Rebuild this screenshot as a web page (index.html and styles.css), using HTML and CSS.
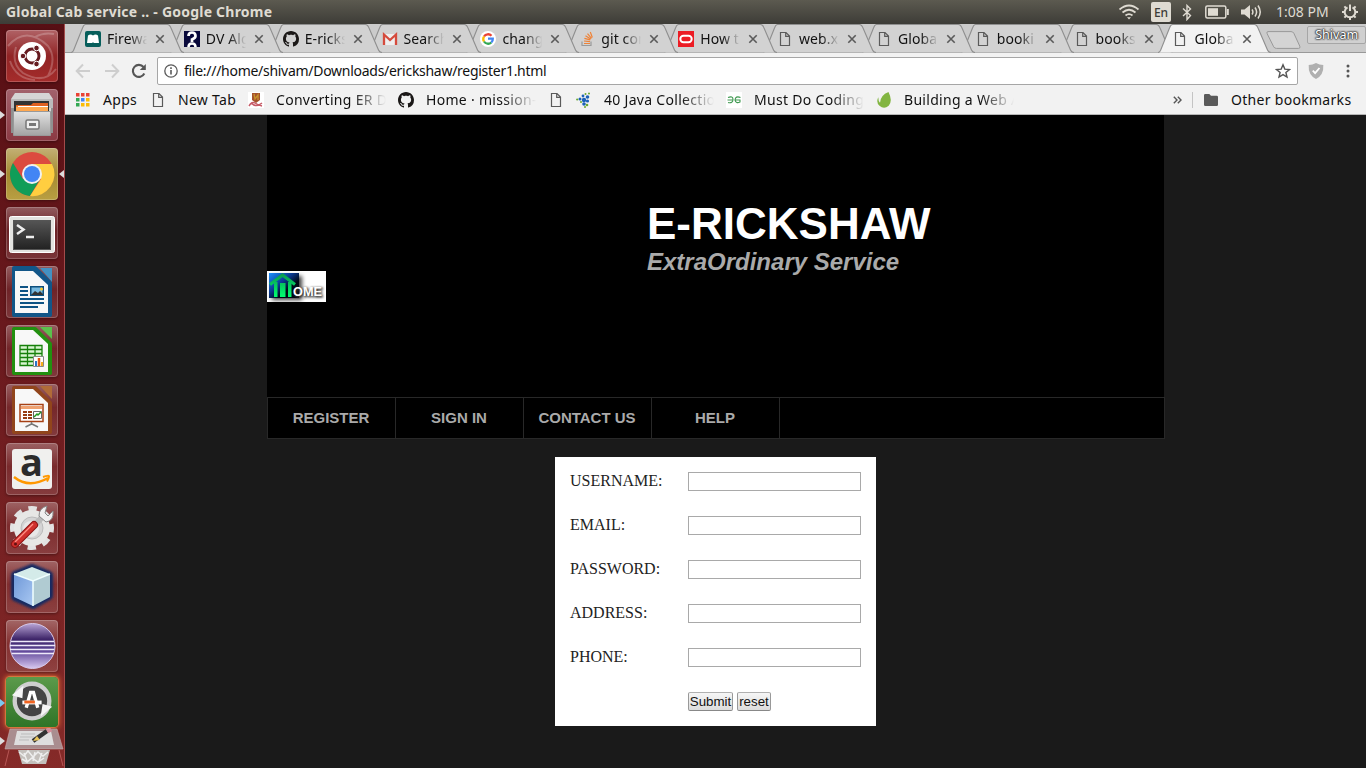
FILE: index.html
```html
<!DOCTYPE html>
<html lang="en">
<head>
<meta charset="utf-8">
<title>Global Cab service ..</title>
<link rel="stylesheet" href="styles.css">
</head>
<body>
<svg class="defs" width="0" height="0">
  <defs>
    <linearGradient id="gray" x1="0" y1="0" x2="0" y2="1"><stop offset="0" stop-color="#e2e2e2"/><stop offset="1" stop-color="#a3a3a3"/></linearGradient>
    <linearGradient id="dark" x1="0" y1="0" x2="0" y2="1"><stop offset="0" stop-color="#555"/><stop offset="1" stop-color="#222"/></linearGradient>
    <linearGradient id="bluebox" x1="0" y1="0" x2="1" y2="1"><stop offset="0" stop-color="#6f98d8"/><stop offset="1" stop-color="#a9c8f2"/></linearGradient>
    <linearGradient id="purple" x1="0" y1="0" x2="0" y2="1"><stop offset="0" stop-color="#b9a5d6"/><stop offset=".35" stop-color="#3d2468"/><stop offset=".6" stop-color="#5d4496"/><stop offset="1" stop-color="#d8c8f0"/></linearGradient>
    <linearGradient id="homebg" x1="0" y1="0" x2="1" y2="1"><stop offset="0" stop-color="#1e90ff"/><stop offset=".4" stop-color="#0a3a90"/><stop offset=".65" stop-color="#000814"/></linearGradient>
    <linearGradient id="arrow" gradientUnits="userSpaceOnUse" x1="0" y1="3" x2="0" y2="26"><stop offset="0" stop-color="#0a9a50"/><stop offset="1" stop-color="#00ff70"/></linearGradient>
    <filter id="soft" x="-30%" y="-30%" width="160%" height="160%"><feGaussianBlur stdDeviation="2.2"/></filter>
    <filter id="soft1" x="-30%" y="-30%" width="160%" height="160%"><feGaussianBlur stdDeviation="1.1"/></filter>
  </defs>
  <symbol id="shape" viewBox="0 0 113 29"><path d="M0 28.500C1.500 28.500 2 27.500 2.500 26.500L11.500 4C12.300 1.500 13 .5 14.500 .5H96.500C98 .5 99 1.500 99.800 3.500L109.500 26C110.300 28 111 28.500 113 28.500" stroke="#8f8f8f" stroke-width="1.100"/></symbol>
  <symbol id="page" viewBox="0 0 16 16"><path d="M3.500 1.500h5.500l3.500 3.500v9.500h-9zM8.700 2v3.300h3.300" fill="none" stroke="#5a5a5a" stroke-width="1.200"/></symbol>
  <symbol id="close" viewBox="0 0 10 10"><path d="M1.300 1.300l7.400 7.400M8.700 1.300l-7.400 7.400" stroke="#5a5a5a" stroke-width="1.600"/></symbol>
  <symbol id="github" viewBox="0 0 16 16"><path fill="#1b1817" d="M8 0C3.580 0 0 3.580 0 8c0 3.540 2.290 6.530 5.470 7.590.4.070.55-.17.55-.38 0-.19-.01-.82-.01-1.490-2.010.37-2.530-.49-2.690-.94-.09-.23-.48-.94-.82-1.130-.28-.15-.68-.52-.01-.53.63-.01 1.080.58 1.230.82.72 1.210 1.870.87 2.330.66.070-.52.28-.87.51-1.070-1.780-.2-3.640-.89-3.640-3.950 0-.87.31-1.590.82-2.150-.08-.2-.36-1.020.08-2.120 0 0 .67-.21 2.200.82.64-.18 1.320-.27 2-.27s1.360.09 2 .27c1.530-1.040 2.200-.82 2.200-.82.44 1.100.16 1.920.08 2.120.51.56.82 1.270.82 2.150 0 3.070-1.870 3.750-3.650 3.950.29.25.54.73.54 1.480 0 1.070-.01 1.930-.01 2.200 0 .21.15.46.55.38A8.010 8.010 0 0 0 16 8c0-4.420-3.580-8-8-8z"/></symbol>
</svg>

<header class="panel">
  <div class="panel-title">Global Cab service .. - Google Chrome</div>
  <div class="tray">
    <svg class="wifi" width="22" height="16" viewBox="0 0 22 16" fill="none" stroke="#dfdbd2" stroke-width="1.700"><path d="M1.500 5.500Q11-2.500 20.500 5.500M4.500 8.500Q11 3 17.500 8.500M7.500 11.500Q11 8.700 14.500 11.500"/><path d="M9 13.300h4L11 15.500z" fill="#dfdbd2" stroke="none"/></svg>
    <span class="lang">En</span>
    <svg class="bt" width="10" height="17" viewBox="0 0 10 17" fill="none" stroke="#dfdbd2" stroke-width="1.400"><path d="M1 4.500l7.500 7L5 15.500V1.500L8.500 5 1 12"/></svg>
    <svg class="batt" width="24" height="14" viewBox="0 0 24 14"><rect x=".8" y="1" width="20" height="12" rx="1.500" fill="none" stroke="#dfdbd2" stroke-width="1.500"/><rect x="3" y="3.200" width="10" height="7.600" fill="#dfdbd2"/><path d="M22.800 4v6" stroke="#dfdbd2" stroke-width="2"/></svg>
    <svg class="vol" width="21" height="16" viewBox="0 0 21 16"><path d="M0 5.500h3.500L9 1v14l-5.500-4.500H0z" fill="#dfdbd2"/><path d="M11 5.500q1.800 2.500 0 5M14 3.500q3.200 4.500 0 9M17 1.500q4.500 6.500 0 13" fill="none" stroke="#dfdbd2" stroke-width="1.500"/></svg>
    <span class="clock">1:08 PM</span>
    <svg class="gear" width="18" height="18" viewBox="0 0 18 18" fill="none" stroke="#dfdbd2"><path d="M6.500 4.300a5.300 5.300 0 1 0 5 0" stroke-width="2"/><path d="M9 1.500v6.500" stroke-width="2"/><path d="M3.400 3.400l1.800 1.800M14.600 3.400l-1.800 1.800M1 9h2.500M17 9h-2.500M3.400 14.600l1.800-1.800M14.600 14.600l-1.800-1.800M9 17v-2.500" stroke-width="2"/></svg>
  </div>
</header>

<div class="desktop">
  <aside class="launcher">
    <div class="tile ubuntu"><svg viewBox="0 0 52 52"><path d="M2 16Q20-5 42 16Q51 28 42 46M48 4Q38 2 29 7M50 39Q38 55 17 43Q5 34 10 17M4 31Q10 49 29 50" fill="none" stroke="#fff" stroke-opacity=".22" stroke-width="2"/><circle cx="26" cy="26" r="14" fill="#fff"/><circle cx="26" cy="26" r="7" fill="none" stroke="#661b20" stroke-width="3"/><g fill="#661b20" stroke="#fff" stroke-width="1"><circle cx="17" cy="26" r="2.800"/><circle cx="30.500" cy="18" r="2.800"/><circle cx="30.500" cy="34" r="2.800"/></g></svg></div>
    <div class="tile files"><svg viewBox="0 0 52 52"><path d="M9 4h34l4 6v34H5V10z" fill="#d5d5d5"/><path d="M5 10h42v9H5z" fill="#bbb"/><path d="M5 19h3v25H5zM45 19h2v25h-2z" fill="#909090"/><path d="M8 12h35v12H8z" fill="#333"/><path d="M10 16h15l2-2h15v8H10z" fill="#e06020"/><path d="M10 17.500h32v5H10z" fill="#ffa850"/><path d="M12 17.500h30" stroke="#fff" stroke-width="1"/><path d="M7.500 22.500h37v24h-37z" fill="url(#gray)" stroke="#999"/><rect x="20" y="31" width="13" height="9" rx="1.500" fill="#eee" stroke="#777" stroke-width="1.500"/><path d="M23 35.500h7" stroke="#777" stroke-width="3"/></svg><i class="pip left"></i></div>
    <div class="tile chrome"><svg viewBox="0 0 52 52"><circle cx="26" cy="26" r="22" fill="#dc4b3f"/><path d="M7 15A22 22 0 0 0 24 48L34 31 26 26 17 31z" fill="#109d58"/><path d="M26 16H46A22 22 0 0 1 24 48L35 31z" fill="#ffce40"/><circle cx="26" cy="26" r="10" fill="#f1f1f1"/><circle cx="26" cy="26" r="8" fill="#4285f4"/></svg><i class="pip left"></i><i class="pip right"></i></div>
    <div class="tile"><svg viewBox="0 0 52 52"><rect x="3.500" y="9.500" width="45" height="36" rx="2" fill="#e3e3e0" stroke="#fff"/><rect x="7.500" y="13.500" width="37" height="29" fill="url(#dark)" stroke="#555"/><path d="M11 18l6.500 4.500-6.500 4.500M20 30h8" fill="none" stroke="#eee" stroke-width="2.500"/></svg></div>
    <div class="tile"><svg viewBox="0 0 52 52"><path d="M8 2h21l15 15v32H8z" fill="#125688" stroke="#125688" stroke-width="4" stroke-linejoin="round"/><path d="M9 5h18l15 14v28H9z" fill="#f8f8f8"/><path d="M34 2h12v14z" fill="#4391c2"/><path d="M14 21h8M14 25h8M14 29h8M14 33h24M14 37h24M14 41h18" stroke="#0e5384" stroke-width="2"/><path d="M24 20h14v10H24z" fill="#0d4f7d"/><path d="M25.500 21.500h11v7h-11z" fill="#77b9df"/><path d="M25 29l4-4 3 2 2-2 3 3v1z" fill="#333"/><circle cx="35.500" cy="23" r="1.500" fill="#ffca28"/></svg></div>
    <div class="tile"><svg viewBox="0 0 52 52"><path d="M8 4h21l15 15v29H8z" fill="#229010" stroke="#229010" stroke-width="4" stroke-linejoin="round"/><path d="M9 5h18l15 14v28H9z" fill="#f8f8f8"/><path d="M34 2h12v12z" fill="#5bc04c"/><path d="M14 20.500h22v20H14zM14 24.500h22M14 28.500h22M14 32.500h22M14 36.500h22M21.500 20v20M29 20v20" fill="#d8f5d0" stroke="#16800a" stroke-width="1.300"/><path d="M27.500 31.500h10v10h-10z" fill="#fff" stroke="#888"/><path d="M30 36v5" stroke="#2b73c7" stroke-width="2"/><path d="M33 33v8" stroke="#e25611" stroke-width="2.500"/><path d="M36 37v4" stroke="#f5ad1b" stroke-width="2"/></svg></div>
    <div class="tile"><svg viewBox="0 0 52 52"><path d="M8 4h21l15 15v29H8z" fill="#91451c" stroke="#91451c" stroke-width="4" stroke-linejoin="round"/><path d="M9 5h18l15 14v28H9z" fill="#f8f8f8"/><path d="M34 2h12v13z" fill="#b16b38"/><path d="M14 20.500h23v17H14z" fill="#fff" stroke="#a64014" stroke-width="1.500"/><path d="M15 22h21v3H15z" fill="#efa170"/><path d="M17 28h4M17 31h4M17 34h4M22 28h4M22 31h4M22 34h4" stroke="#963c11" stroke-width="2"/><path d="M27.500 27.500h8v7h-8z" fill="#fff" stroke="#666"/><path d="M28 33l3-3 1 1 3-3" fill="none" stroke="#229c25" stroke-width="1.500"/><path d="M25.500 38v2l-6 3M26 40l6 3" stroke="#777" stroke-width="1.500" fill="none"/></svg></div>
    <div class="tile"><svg viewBox="0 0 52 52"><rect x="6" y="6" width="40" height="40" rx="3" fill="#f0f0ee"/><text x="25.500" y="33" text-anchor="middle" class="amz">a</text><path d="M8 34q15 12 34 1" fill="none" stroke="#ff9800" stroke-width="2.500"/><path d="M37 34q6-2 6-.5t-2 5" fill="none" stroke="#ff9800" stroke-width="2"/></svg></div>
    <div class="tile"><svg viewBox="0 0 52 52"><circle cx="26" cy="26" r="19" fill="none" stroke="#e2e2e2" stroke-width="6" stroke-dasharray="8 6.920" transform="rotate(-12 26 26)"/><circle cx="26" cy="26" r="18" fill="#e7e7e5"/><circle cx="26" cy="26" r="11" fill="#d4d4d4" stroke="#bbb"/><circle cx="25" cy="27" r="8" fill="#e8e8e8"/><path d="M28 24L38 13" stroke="#bbb" stroke-width="6"/><path d="M33 14q0-8 8-10l-2 7 3 3 5-5q1 10-7 11z" fill="#f0f0f0" stroke="#888"/><path d="M9 42L28 23" stroke="#8b1414" stroke-width="8" stroke-linecap="round"/><path d="M9 42L28 23" stroke="#d0302d" stroke-width="6" stroke-linecap="round"/><path d="M9 40L27 22" stroke="#ff8d83" stroke-width="1.200"/><circle cx="9.500" cy="42" r="1.500" fill="#621010"/></svg></div>
    <div class="tile"><svg viewBox="0 0 52 52"><path d="M26 7L43 14V35L27 44 9 36V14z" fill="#16295c" stroke="#172b62" stroke-width="8" stroke-linejoin="round" filter="url(#soft1)"/><path d="M26 6L44 13 27 20 8 13z" fill="#d4ebe9"/><path d="M8 13l19 7v25L8 36z" fill="url(#bluebox)"/><path d="M27 20l17-7v23L27 45z" fill="#b0cbd2"/><path d="M8 13l19 7 17-7M27 20v25" stroke="#f0ffff" stroke-width="1.500" fill="none"/></svg></div>
    <div class="tile"><svg viewBox="0 0 52 52"><circle cx="26.500" cy="26" r="22.500" fill="url(#purple)" stroke="#d7c9ea"/><path d="M5 21.500h43M4 25.500h45M4 29.500h44M6 33.500h42" stroke="#eee9f9" stroke-width="1.300"/></svg></div>
    <div class="tile updater"><svg viewBox="0 0 52 52"><circle cx="26" cy="25" r="18" fill="#444" stroke="#cfcfcf" stroke-width="4.500"/><path d="M5 19L17 9 16 22zM47 31L35 41 37 28z" fill="#f5f5f5"/><path d="M20 32l4.500-16h3l4.500 16" fill="none" stroke="#fff" stroke-width="3.500"/><path d="M16 26.500h20" stroke="#fff" stroke-width="4"/><path d="M18 26h11" stroke="#f26522" stroke-width="3"/></svg><i class="pip left blue"></i></div>
    <div class="folded"><svg viewBox="0 0 60 40" width="60" height="40"><path d="M6 1h47l6 20H1z" fill="#a98d8f" stroke="#caa" stroke-opacity=".6"/><path d="M13 3h34l3 14H10z" fill="#dedede"/><path d="M17 6h14M16 9h14M15 12h10" stroke="#bbb"/><path d="M29 13L43 3" stroke="#333" stroke-width="4.500"/><path d="M29 13l4-5 3 4z" fill="#e7c35a"/><path d="M43 3l4-2" stroke="#d48d9a" stroke-width="5"/><path d="M14 22h32l-4 14H18z" fill="#c4c0bc"/><path d="M15 24l5 4 4-5 5 6 5-5 5 4 5-4M18 31l5 3 5-4 6 4 6-4M20 25l3 8M31 24l-2 9M38 25l-3 8" fill="none" stroke="#eee" stroke-width="1.500"/><path d="M5 22L1 38M55 22l4 16" stroke="#b75755"/></svg><i class="pip left"></i></div>
  </aside>

  <section class="browser">
    <div class="tabstrip">
      <div class="tab"><svg class="shape"><use href="#shape"/></svg><svg class="fav" viewBox="0 0 16 16"><rect width="16" height="16" rx="2" fill="#075e5b"/><path d="M3 4.500q2.500-2 5 0 2.500-2 5 0l1 7.500H9l-1-.8-1 .8H2z" fill="#fff"/></svg><span class="label">Firewa</span><svg class="x"><use href="#close"/></svg></div>
      <div class="tab"><svg class="shape"><use href="#shape"/></svg><svg class="fav" viewBox="0 0 16 16"><rect width="16" height="16" fill="#08083a"/><path d="M4.500 5q0-3.500 3.500-3.500T11.500 5Q11.500 7 8 8.500V11" fill="none" stroke="#fff" stroke-width="2.700"/><path d="M4.500 16q0-3.500 3.500-3.500t3.500 3.500" fill="none" stroke="#fff" stroke-width="2.500"/></svg><span class="label">DV Alg</span><svg class="x"><use href="#close"/></svg></div>
      <div class="tab"><svg class="shape"><use href="#shape"/></svg><svg class="fav"><use href="#github"/></svg><span class="label">E-ricks</span><svg class="x"><use href="#close"/></svg></div>
      <div class="tab"><svg class="shape"><use href="#shape"/></svg><svg class="fav" viewBox="0 0 16 16"><path d="M1 3h14v11H1z" fill="#eee"/><path d="M2 14V3.500l6 5.500 6-5.500V14" fill="none" stroke="#d54b3d" stroke-width="2.300"/></svg><span class="label">Search</span><svg class="x"><use href="#close"/></svg></div>
      <div class="tab"><svg class="shape"><use href="#shape"/></svg><svg class="fav" viewBox="0 0 16 16"><circle cx="8" cy="8" r="8" fill="#fff"/><g fill="none" stroke-width="2.300"><path d="M4 5.500A4.800 4.800 0 0 1 11.500 4.700" stroke="#ea4335"/><path d="M4 5.500a4.800 4.800 0 0 0 0 5" stroke="#fbbc05"/><path d="M4 10.500a4.800 4.800 0 0 0 7.300 1" stroke="#34a853"/><path d="M11.300 11.500Q13 10 12.800 7.700H8" stroke="#4285f4"/></g></svg><span class="label">chang</span><svg class="x"><use href="#close"/></svg></div>
      <div class="tab"><svg class="shape"><use href="#shape"/></svg><svg class="fav" viewBox="0 0 16 16"><path d="M3 10.500v4h9v-4" fill="none" stroke="#999" stroke-width="1.200"/><path d="M5 12.500h6M5 10l6 .6M5.400 7.300l5.900 1.600M6.500 4.800l5.200 3.200M8.500 2.600l4 4.700M11.300 1l2 5.500" stroke="#ef8236" stroke-width="1.200"/></svg><span class="label">git com</span><svg class="x"><use href="#close"/></svg></div>
      <div class="tab"><svg class="shape"><use href="#shape"/></svg><svg class="fav" viewBox="0 0 16 16"><path d="M0 0h16v16H0z" fill="#ec1c24"/><rect x="2.300" y="4.800" width="11.400" height="6.400" rx="3.200" fill="none" stroke="#fff" stroke-width="2"/></svg><span class="label">How t</span><svg class="x"><use href="#close"/></svg></div>
      <div class="tab"><svg class="shape"><use href="#shape"/></svg><svg class="fav"><use href="#page"/></svg><span class="label">web.x</span><svg class="x"><use href="#close"/></svg></div>
      <div class="tab"><svg class="shape"><use href="#shape"/></svg><svg class="fav"><use href="#page"/></svg><span class="label">Globa</span><svg class="x"><use href="#close"/></svg></div>
      <div class="tab"><svg class="shape"><use href="#shape"/></svg><svg class="fav"><use href="#page"/></svg><span class="label">booki</span><svg class="x"><use href="#close"/></svg></div>
      <div class="tab"><svg class="shape"><use href="#shape"/></svg><svg class="fav"><use href="#page"/></svg><span class="label">books</span><svg class="x"><use href="#close"/></svg></div>
      <div class="tab active"><svg class="shape"><use href="#shape"/></svg><svg class="fav"><use href="#page"/></svg><span class="label">Globa</span><svg class="x"><use href="#close"/></svg></div>
      <svg class="newtab" width="36" height="18" viewBox="0 0 36 18"><path d="M2 .6h23q2 0 2.800 1.600l6 13q.8 2.200-1.300 2.200H10.500q-2 0-2.800-1.600l-6.500-13Q.3.600 2 .6z" fill="#d4d4d4" stroke="#999"/></svg>
      <span class="profile">Shivam</span>
    </div>

    <div class="toolbar">
      <svg class="back" width="16" height="16" viewBox="0 0 16 16"><path d="M15 8H2M8 1.500L1.700 8 8 14.500" fill="none" stroke="#cecece" stroke-width="2"/></svg>
      <svg class="fwd" width="16" height="16" viewBox="0 0 16 16"><path d="M1 8h13M8 1.500L14.300 8 8 14.500" fill="none" stroke="#cecece" stroke-width="2"/></svg>
      <svg class="reload" width="16" height="16" viewBox="0 0 16 16"><path d="M13.300 10.500A6 6 0 1 1 12.500 4" fill="none" stroke="#565656" stroke-width="2.100"/><path d="M14.800 1v6H8.800z" fill="#565656"/></svg>
      <div class="omnibox">
        <svg width="14" height="14" viewBox="0 0 14 14"><circle cx="7" cy="7" r="6.200" fill="none" stroke="#5a5a5a" stroke-width="1.300"/><path d="M7 6v4.500M7 3.300v1.600" stroke="#5a5a5a" stroke-width="1.600"/></svg>
        <span class="url">file:///home/shivam/Downloads/erickshaw/register1.html</span>
        <svg class="star" width="16" height="16" viewBox="0 0 16 16"><path d="M8 1.800l1.800 4.300 4.700.4-3.600 3 1.100 4.600L8 11.600l-4 2.500 1.100-4.600-3.600-3 4.700-.4z" fill="none" stroke="#555" stroke-width="1.400"/></svg>
      </div>
      <svg class="shield" width="16" height="16" viewBox="0 0 16 16"><path d="M8 0q3.500 2 7.300 2Q16 12 8 16 0 12 .7 2 4.500 2 8 0z" fill="#b0b0b0"/><path d="M4.800 7.700l2.300 2.500L11.500 5" fill="none" stroke="#fff" stroke-width="1.800"/></svg>
      <svg class="dots" width="4" height="14" viewBox="0 0 4 14" fill="#555"><circle cx="2" cy="2" r="1.500"/><circle cx="2" cy="7" r="1.500"/><circle cx="2" cy="12" r="1.500"/></svg>
    </div>

    <nav class="bookmarks">
      <svg class="apps" width="14" height="14" viewBox="0 0 14 14"><path d="M0 0h3.500v3.500H0zM5 0h3.500v3.500H5zM10 0h3.500v3.500H10z" fill="#ea4335"/><path d="M0 5h3.500v3.500H0zM0 10h3.500v3.500H0z" fill="#34a853"/><path d="M5 5h3.500v3.500H5z" fill="#4285f4"/><path d="M10 5h3.500v3.500H10zM5 10h3.500v3.500H5zM10 10h3.500v3.500H10z" fill="#fbbc05"/></svg>
      <span class="bm w-apps">Apps</span>
      <svg class="ico"><use href="#page"/></svg><span class="bm w-new">New Tab</span>
      <svg class="ico" viewBox="0 0 16 16"><path d="M0 0h16v16H0z" fill="#fff"/><path d="M4 1h8v7l-4 3-4-3z" fill="#a4522c"/><path d="M6 2l1 5 3-4v5" stroke="#c9932b" stroke-width="1.300" fill="none"/><path d="M1 14q3-5 6-3t7 3M3 11q5 5 11 0" stroke="#c75b67" stroke-width="1.500" fill="none"/></svg><span class="bm fade w-long">Converting ER D</span>
      <svg class="ico"><use href="#github"/></svg><span class="bm fade w-long">Home · mission-</span>
      <svg class="ico lone"><use href="#page"/></svg>
      <svg class="ico" viewBox="0 0 16 16"><g fill="#1b61b8"><circle cx="8" cy="8" r="2.200"/><circle cx="11.500" cy="5" r="1.800"/><circle cx="7" cy="4" r="1.400"/><circle cx="4" cy="7" r="1.500"/><circle cx="11.500" cy="9" r="1.600"/><circle cx="8" cy="12" r="1.800"/></g><g fill="#68a82e"><circle cx="1.200" cy="7.500" r="1.100"/><circle cx="9.500" cy="2" r="1"/><circle cx="13" cy="1.500" r="1"/><circle cx="11" cy="13" r="1.300"/><circle cx="5" cy="10" r="1"/><circle cx="9" cy="15" r="1"/></g></svg><span class="bm fade w-long">40 Java Collectio</span>
      <svg class="ico" viewBox="0 0 16 16"><path d="M0 0h16v16H0z" fill="#fff"/><path d="M1.500 8H7M2 5.500q5-2 5 2t-5 3M14.500 8H9M14.500 5.500q-5-2-5.500 2.500 1 4 5 2V8" fill="none" stroke="#3f9950" stroke-width="1.100"/></svg><span class="bm fade w-long">Must Do Coding</span>
      <svg class="ico" viewBox="0 0 16 16"><path d="M12.500 0Q17 9 12.700 13.800 8 17.500 3.500 13.800-.3 10 2.300 5.200q0 4 1.700 5.600Q4.500 3 12.500 0z" fill="#82b541"/></svg><span class="bm fade w-long">Building a Web A</span>
      <svg class="more" width="9" height="8" viewBox="0 0 9 8"><path d="M.8.8L4 4 .8 7.200M4.800.8L8 4 4.800 7.200" fill="none" stroke="#555" stroke-width="1.400"/></svg>
      <span class="divider"></span>
      <svg class="folder" width="14" height="12" viewBox="0 0 14 12"><path d="M1.300 0h4L7 1.700h5.700q1.300 0 1.300 1.300v7.700q0 1.300-1.300 1.300H1.300Q0 12 0 10.700V1.300Q0 0 1.300 0z" fill="#5a5a5a"/></svg>
      <span class="bm other">Other bookmarks</span>
    </nav>

    <main class="viewport">
      <div class="banner">
        <svg class="home" width="59" height="31" viewBox="0 0 59 31"><path d="M0 0h59v31H0z" fill="#fff"/><path d="M5 5h30v24H5z" fill="#000" filter="url(#soft)" opacity=".75"/><path d="M2 2h30v25H2z" fill="url(#homebg)"/><path d="M3 13.500L15.500 4 28 13.500" fill="none" stroke="url(#arrow)" stroke-width="3.200"/><path d="M7 11h3.500v15H7zM21 11h3.500v15H21zM13 12h5.500v14H13z" fill="url(#arrow)"/><text x="27" y="26" class="ome shade" textLength="29" lengthAdjust="spacingAndGlyphs">OME</text><text x="26" y="25" class="ome" textLength="29" lengthAdjust="spacingAndGlyphs">OME</text></svg>
        <div class="brand"><h1>E-RICKSHAW</h1><h2>ExtraOrdinary Service</h2></div>
      </div>
      <nav class="menu"><a>REGISTER</a><a>SIGN IN</a><a>CONTACT US</a><a>HELP</a></nav>
      <form class="form">
        <label for="u">USERNAME:</label><input id="u" type="text">
        <label for="e">EMAIL:</label><input id="e" type="text">
        <label for="p">PASSWORD:</label><input id="p" type="password">
        <label for="a">ADDRESS:</label><input id="a" type="text">
        <label for="t">PHONE:</label><input id="t" type="text">
        <div class="actions"><button type="button" class="submit">Submit</button><button type="button" class="reset">reset</button></div>
      </form>
    </main>
  </section>
</div>
</body>
</html>
```
FILE: styles.css
```css
* { box-sizing: border-box; }
body { margin: 0; width: 1366px; height: 768px; overflow: hidden; background: #1a1a1a; font-family: "Noto Sans", sans-serif; }
svg { display: block; flex: none; }
.defs { position: absolute; }

/* Top panel */
.panel { height: 24px; display: flex; align-items: center; justify-content: space-between; padding: 0 7px 0 6px; background: linear-gradient(#5c5a50, #3d3c37); color: #dfdbd2; }
.panel-title { font-size: 14px; font-weight: 700; letter-spacing: .22px; white-space: nowrap; margin-top: -1px; }
.tray { display: flex; align-items: center; }
.lang { width: 20px; height: 20px; margin-left: 11px; border-radius: 2px; background: #dfdbd2; color: #3c3b37; font-size: 12px; font-weight: 500; line-height: 21px; text-align: center; }
.bt { margin-left: 11px; }
.batt { margin-left: 13px; }
.vol { margin-left: 12px; }
.clock { width: 52px; margin: -1px 0 0 14px; font-size: 14px; white-space: nowrap; }
.gear { margin-left: 13px; }

.desktop { display: flex; height: 744px; }

/* Launcher */
.launcher { width: 65px; flex: none; padding: 6px 0 0 6px; overflow: hidden; display: flex; flex-direction: column; gap: 7px; background: linear-gradient(90deg, transparent 64px, #a34b4b 64px), linear-gradient(#570f14, #6b1a1e 45%, #852a28); }
.tile { position: relative; width: 52px; height: 52px; flex: none; border-radius: 4px; background: linear-gradient(rgba(255,255,255,.3), rgba(255,255,255,.05) 45%, rgba(255,255,255,.13)); box-shadow: inset 0 0 0 1px rgba(255,255,255,.2), 0 1px 3px rgba(0,0,0,.35); }
.tile svg { width: 52px; height: 52px; }
.ubuntu { background: linear-gradient(#b06266, #912425 50%, #a52c2b); }
.files { background: linear-gradient(#a2626c, #8b3943); }
.chrome { background: linear-gradient(#c3b075, #a58b32 50%, #b99f42); }
.updater { height: 50px; margin-top: -2px; background: linear-gradient(#5c9a4b, #2f7427); box-shadow: 0 0 1px 1px #d97a40, 0 0 5px 2px #c75a32; }
.updater svg { height: 50px; }
.folded { position: relative; width: 60px; height: 40px; margin: -6px 0 0 -2px; flex: none; }
.amz { font: 700 38px "Open Sans", sans-serif; fill: #2b2b2b; }
.pip { position: absolute; top: 22px; border: 4px solid transparent; }
.pip.left { left: -6px; border-left: 5px solid #ddd; border-right: 0; }
.pip.right { right: -6px; border-right: 5px solid #ddd; border-left: 0; }
.pip.blue { border-left-color: #7cc8f0; }
.folded .pip { left: -4px; top: 9px; }

/* Browser chrome */
.browser { width: 1301px; flex: none; display: flex; flex-direction: column; }
.tabstrip { height: 29px; display: flex; padding-left: 6px; background: linear-gradient(#cbcbcb 28px, #999 28px); overflow: hidden; }
.tab { position: relative; isolation: isolate; width: 113px; height: 29px; flex: none; margin-right: -14.150px; padding: 1px 0 0 14px; display: flex; align-items: center; }
.tab:nth-child(1) { z-index: 12; } .tab:nth-child(2) { z-index: 11; } .tab:nth-child(3) { z-index: 10; } .tab:nth-child(4) { z-index: 9; }
.tab:nth-child(5) { z-index: 8; } .tab:nth-child(6) { z-index: 7; } .tab:nth-child(7) { z-index: 6; } .tab:nth-child(8) { z-index: 5; }
.tab:nth-child(9) { z-index: 4; } .tab:nth-child(10) { z-index: 3; } .tab:nth-child(11) { z-index: 2; }
.tab.active { z-index: 20; }
.shape { position: absolute; z-index: -1; left: 0; top: 0; width: 113px; height: 29px; fill: #d2d2d2; }
.active .shape { fill: #f2f2f2; }
.fav, .ico { width: 16px; height: 16px; }
.label { width: 41px; margin: -2px 0 0 6px; font-size: 14px; letter-spacing: .1px; overflow: hidden; white-space: nowrap; color: #111; -webkit-mask-image: linear-gradient(90deg, #000 55%, transparent 98%); mask-image: linear-gradient(90deg, #000 55%, transparent 98%); }
.x { width: 10px; height: 10px; margin-left: 7px; }
.newtab { margin: 7px 0 0 9px; }
.profile { width: 60px; height: 18px; margin: 2px 0 0 5px; border: 1px solid #a6a6a6; border-radius: 2px; background: #d0d0d0; color: #fff; font-size: 12.500px; line-height: 16px; text-align: center; text-shadow: 0 0 1px #222, 0 0 2px #333, 0 0 2px #333, 0 0 2px #333; }
.toolbar { height: 32px; display: flex; align-items: center; background: #f2f2f2; padding: 3px 0 0 10px; }
.fwd { margin-left: 13px; }
.reload { margin-left: 11px; }
.omnibox { width: 1141px; height: 28px; margin-left: 10px; padding: 0 6px; display: flex; align-items: center; border: 1px solid #a6a6a6; border-radius: 2px; background: #fff; }
.url { margin-left: 6px; font-size: 14px; letter-spacing: -.28px; white-space: nowrap; color: #111; }
.star { margin-left: auto; }
.shield { margin-left: 10px; }
.dots { margin-left: 22px; }
.bookmarks { height: 30px; display: flex; align-items: center; background: #f2f2f2; border-bottom: 1px solid #b6b6b6; padding-left: 11px; }
.bm { flex: none; margin-left: 12px; font-size: 14px; letter-spacing: .3px; color: #111; white-space: nowrap; overflow: hidden; }
.apps { margin-right: 1px; }
.w-apps { width: 35px; overflow: visible; }
.w-new { width: 58px; overflow: visible; }
.w-long { width: 110px; }
.bm + .ico { margin-left: 12px; }
.fade { -webkit-mask-image: linear-gradient(90deg, #000 70%, transparent 100%); mask-image: linear-gradient(90deg, #000 70%, transparent 100%); }
.lone { margin-right: 12px; }
.more { margin-left: auto; }
.divider { width: 1px; height: 16px; margin-left: 10px; background: #c4c4c4; }
.folder { margin-left: 11px; }
.other { width: 121px; margin: 0 14px 0 13px; overflow: visible; }

/* Page */
.viewport { height: 653px; padding-left: 202px; background: #1a1a1a; }
.banner { width: 897px; height: 282px; background: #000; display: flex; align-items: flex-start; }
.home { margin-top: 156px; }
.ome { font: 700 13.500px "Liberation Sans", sans-serif; fill: #fff; }
.shade { fill: #222; filter: url(#soft1); stroke: #333; stroke-width: 1px; }
.brand { margin: 84px 0 0 321px; font-family: "Liberation Sans", Arial, sans-serif; white-space: nowrap; }
h1 { margin: 0; font-size: 44px; line-height: 50px; color: #fff; }
h2 { margin: -1px 0 0; font-size: 24px; line-height: 27px; font-style: italic; color: #aaa; }
.menu { width: 898px; height: 42px; display: flex; background: #000; border: 1px solid #282828; }
.menu a { width: 128px; padding-right: 1px; border-right: 1px solid #282828; font: 700 15px/40px "Liberation Sans", Arial, sans-serif; text-align: center; color: #aaa; }
.form { width: 321px; height: 269px; margin: 18px 0 0 288px; padding: 15px; background: #fff; display: grid; grid-template-columns: 118px 173px; grid-auto-rows: 19px; row-gap: 25px; font: 16px/18px "Liberation Serif", "Times New Roman", serif; color: #222; }
input { width: 173px; height: 19px; border: 1px solid #a9a9a9; padding: 1px; background: #fff; }
.actions { grid-column: 2; display: flex; gap: 4px; }
button { height: 19px; padding: 0; border: 1px solid #999; border-color: #b0b0b0 #999 #888; border-radius: 2px; background: linear-gradient(#f6f6f6, #dcdcdc); font: 13.330px/15px "Liberation Sans", Arial, sans-serif; color: #111; }
.submit { width: 45px; }
.reset { width: 34px; }
```
